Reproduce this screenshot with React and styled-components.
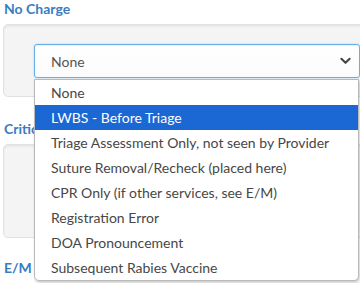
import React from 'react'
import styled, { createGlobalStyle } from 'styled-components'

const GlobalStyle = createGlobalStyle`
  html, body {
    margin: 0;
    padding: 0;
    overflow: hidden;
    background: #fff;
  }
  body {
    font-family: Lato, "Open Sans", sans-serif;
  }
`

const options = [
  'None',
  'LWBS - Before Triage',
  'Triage Assessment Only, not seen by Provider',
  'Suture Removal/Recheck (placed here)',
  'CPR Only (if other services, see E/M)',
  'Registration Error',
  'DOA Pronouncement',
  'Subsequent Rabies Vaccine',
]

export default function App() {
  return (
    <>
      <GlobalStyle />
      <Page>
        <Label>No Charge</Label>
        <Panel>
          <SelectWrap>
            <Select>
              <span>None</span>
              <Chevron viewBox="0 0 12 8">
                <path d="M1.5 1.5 L6 6 L10.5 1.5" />
              </Chevron>
            </Select>
            <Menu>
              {options.map((o, i) => (
                <Option key={o} active={i === 1}>{o}</Option>
              ))}
            </Menu>
          </SelectWrap>
        </Panel>
        <Label gap={23}>Critical Care</Label>
        <Panel height={94} />
        <Label gap={21}>E/M</Label>
      </Page>
    </>
  )
}

const Page = styled.div`
  width: 390px;
  padding: 0 0 0 3px;
`

const Label = styled.div`
  margin: ${p => p.gap || 0}px 0 7px 1px;
  font-size: 14px;
  line-height: 17px;
  font-weight: 700;
  color: #3a7cc1;
`

const Panel = styled.div`
  box-sizing: border-box;
  height: ${p => p.height || 73}px;
  padding: 19px 30px;
  background: #f4f4f4;
  border: 1px solid #e1e1e1;
  border-radius: 5px;
  box-shadow: inset 0 2px 2px rgba(0, 0, 0, 0.05);
`

const SelectWrap = styled.div`
  position: relative;
  width: 326px;
`

const Select = styled.div`
  box-sizing: border-box;
  height: 34px;
  display: flex;
  align-items: center;
  justify-content: space-between;
  padding: 0 8px 0 16px;
  background: linear-gradient(#fff, #fbfbfb);
  border: 1px solid #66aee8;
  border-radius: 3px;
  box-shadow: inset 0 1px 1px rgba(0, 0, 0, 0.06), 0 0 2px rgba(102, 175, 233, 0.5);
  font-size: 14px;
  color: #555;
`

const Chevron = styled.svg`
  width: 11px;
  height: 8px;
  fill: none;
  stroke: #444;
  stroke-width: 2.2;
  stroke-linecap: round;
  stroke-linejoin: round;
`

const Menu = styled.div`
  position: absolute;
  top: calc(100% + 1px);
  left: 0;
  width: 325px;
  box-sizing: border-box;
  background: #fff;
  border: 1px solid #b9b9b9;
  border-radius: 0 0 5px 5px;
  box-shadow: 1px 2px 3px rgba(0, 0, 0, 0.2);
  z-index: 2;
`

const Option = styled.div`
  height: 25px;
  line-height: 25px;
  padding-left: 16px;
  font-size: 14px;
  white-space: nowrap;
  color: ${p => (p.active ? '#fff' : '#474747')};
  background: ${p => (p.active ? '#1b67d3' : 'transparent')};
`
